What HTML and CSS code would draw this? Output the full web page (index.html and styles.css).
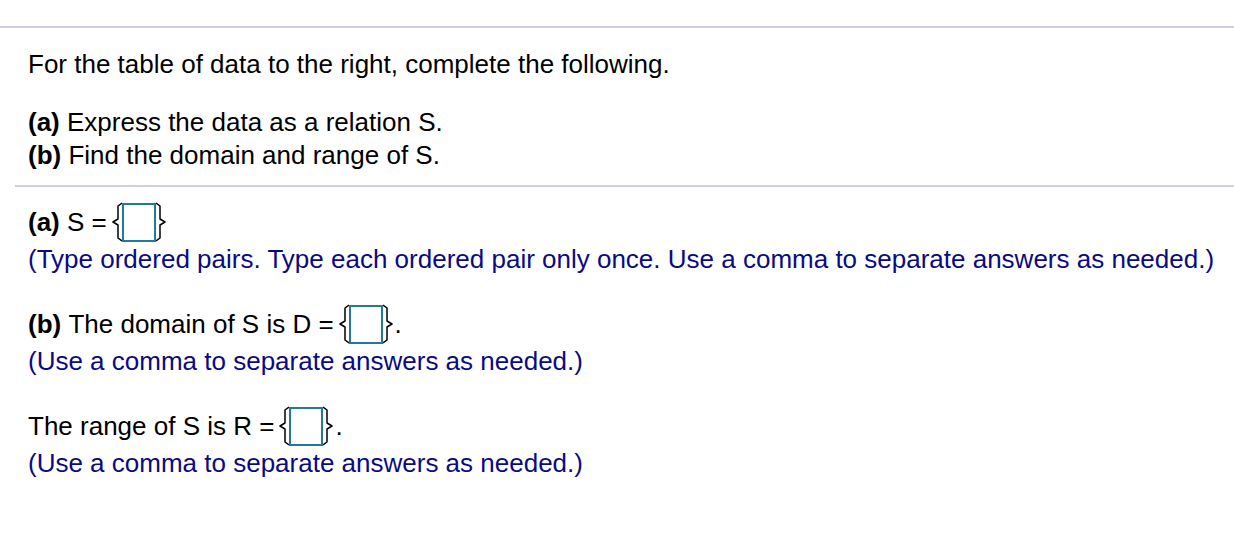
FILE: index.html
```html
<!DOCTYPE html>
<html>
<head>
<meta charset="utf-8">
<link rel="stylesheet" href="styles.css">
</head>
<body>
<div class="page">
  <hr class="rule-top">
  <div class="question">
    <p class="intro">For the table of data to the right, complete the following.</p>
    <div class="parts">
      <div class="line"><b>(a)</b> Express the data as a relation S.</div>
      <div class="line"><b>(b)</b> Find the domain and range of S.</div>
    </div>
  </div>
  <hr class="rule-mid">
  <div class="answers">
    <div class="block">
      <div class="row"><b>(a)</b>&nbsp;S =<span class="set"><svg class="brace" viewBox="0 0 12 40" width="12" height="40"><path d="M12 1 L8 4 L8 17 L3 20 L8 23 L8 36 L12 39"/></svg><span class="box"></span><svg class="brace" viewBox="0 0 12 40" width="12" height="40"><path d="M0 1 L4 4 L4 17 L9 20 L4 23 L4 36 L0 39"/></svg></span></div>
      <div class="hint">(Type ordered pairs. Type each ordered pair only once. Use a comma to separate answers as needed.)</div>
    </div>
    <div class="block">
      <div class="row"><b>(b)</b>&nbsp;The domain of S is D =<span class="set"><svg class="brace" viewBox="0 0 12 40" width="12" height="40"><path d="M12 1 L8 4 L8 17 L3 20 L8 23 L8 36 L12 39"/></svg><span class="box"></span><svg class="brace" viewBox="0 0 12 40" width="12" height="40"><path d="M0 1 L4 4 L4 17 L9 20 L4 23 L4 36 L0 39"/></svg></span>.</div>
      <div class="hint">(Use a comma to separate answers as needed.)</div>
    </div>
    <div class="block">
      <div class="row">The range of S is R =<span class="set"><svg class="brace" viewBox="0 0 12 40" width="12" height="40"><path d="M12 1 L8 4 L8 17 L3 20 L8 23 L8 36 L12 39"/></svg><span class="box"></span><svg class="brace" viewBox="0 0 12 40" width="12" height="40"><path d="M0 1 L4 4 L4 17 L9 20 L4 23 L4 36 L0 39"/></svg></span>.</div>
      <div class="hint">(Use a comma to separate answers as needed.)</div>
    </div>
  </div>
</div>
</body>
</html>
```

FILE: styles.css
```css
html, body {
  margin: 0;
  padding: 0;
  background: #ffffff;
}
body {
  font-family: "Liberation Sans", Arial, Helvetica, sans-serif;
  font-size: 26px;
  color: #000000;
}
.page {
  padding-top: 26px;
}
hr {
  border: 0;
  height: 2px;
  background: #cdd0dc;
  margin: 0;
}
.rule-mid {
  margin-left: 15px;
}
.question {
  padding: 0 0 0 28px;
}
.intro {
  margin: 0;
  padding-top: 21px;
  line-height: 30px;
}
.parts {
  padding-top: 27px;
  padding-bottom: 13px;
}
.line {
  line-height: 33px;
}
.answers {
  padding-left: 28px;
  padding-top: 15px;
}
.block {
  margin-bottom: 28px;
}
.row {
  display: flex;
  align-items: center;
  height: 40px;
}
.set {
  display: inline-flex;
  align-items: center;
  margin-left: 3px;
}
.brace path {
  fill: none;
  stroke: #000;
  stroke-width: 1.5;
  stroke-linejoin: round;
}
.box {
  width: 30px;
  height: 35px;
  border: 2px solid #1f7a9c;
  display: inline-block;
}
.hint {
  color: #0a0a84;
  line-height: 34px;
}
```
